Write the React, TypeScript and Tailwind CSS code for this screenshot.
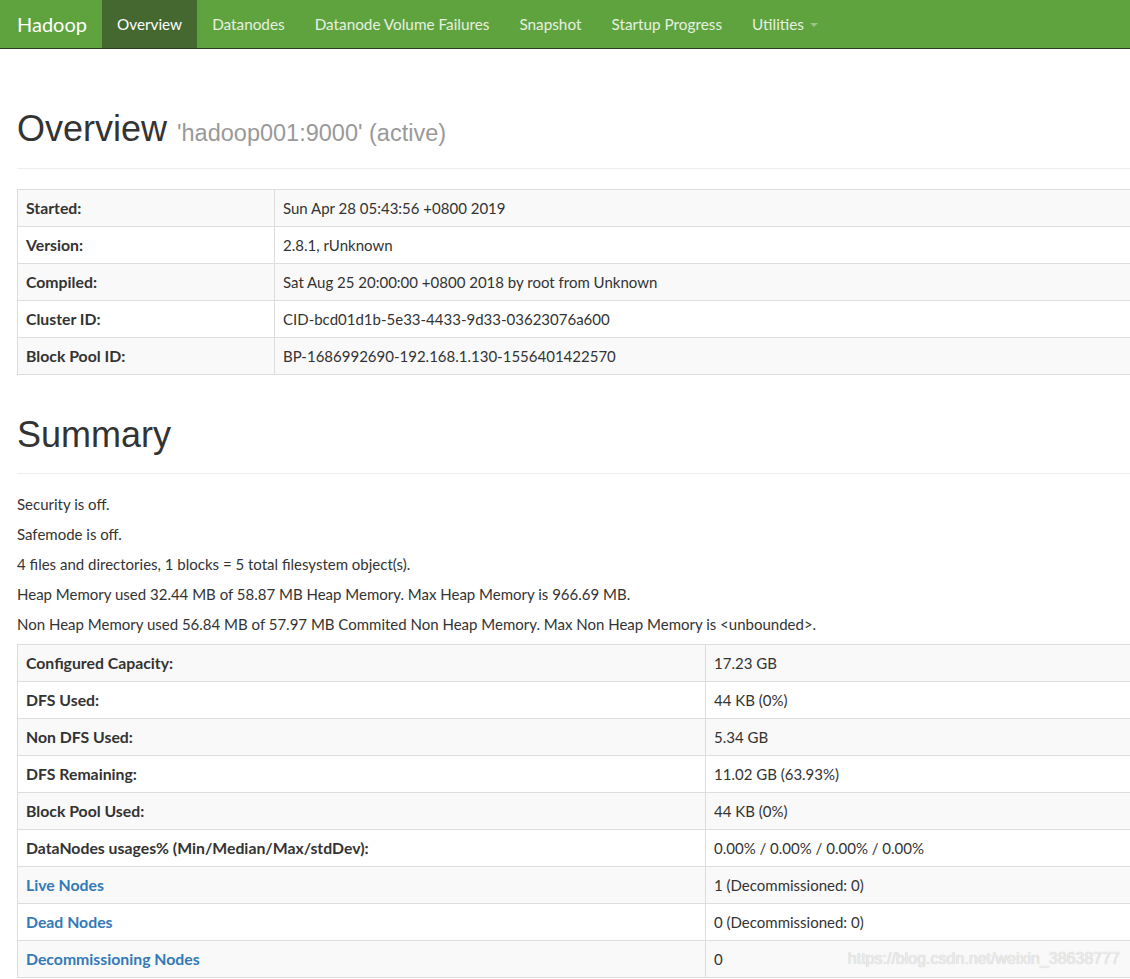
import React from "react";

const nav = [
  "Overview",
  "Datanodes",
  "Datanode Volume Failures",
  "Snapshot",
  "Startup Progress",
];

const info: [string, string, boolean?][] = [
  ["Started:", "Sun Apr 28 05:43:56 +0800 2019"],
  ["Version:", "2.8.1, rUnknown"],
  ["Compiled:", "Sat Aug 25 20:00:00 +0800 2018 by root from Unknown"],
  ["Cluster ID:", "CID-bcd01d1b-5e33-4433-9d33-03623076a600"],
  ["Block Pool ID:", "BP-1686992690-192.168.1.130-1556401422570"],
];

const summaryText = [
  "Security is off.",
  "Safemode is off.",
  "4 files and directories, 1 blocks = 5 total filesystem object(s).",
  "Heap Memory used 32.44 MB of 58.87 MB Heap Memory. Max Heap Memory is 966.69 MB.",
  "Non Heap Memory used 56.84 MB of 57.97 MB Commited Non Heap Memory. Max Non Heap Memory is <unbounded>.",
];

const summary: [string, string, boolean?][] = [
  ["Configured Capacity:", "17.23 GB"],
  ["DFS Used:", "44 KB (0%)"],
  ["Non DFS Used:", "5.34 GB"],
  ["DFS Remaining:", "11.02 GB (63.93%)"],
  ["Block Pool Used:", "44 KB (0%)"],
  ["DataNodes usages% (Min/Median/Max/stdDev):", "0.00% / 0.00% / 0.00% / 0.00%"],
  ["Live Nodes", "1 (Decommissioned: 0)", true],
  ["Dead Nodes", "0 (Decommissioned: 0)", true],
  ["Decommissioning Nodes", "0", true],
];

const PageHeader = ({ children }: { children: React.ReactNode }) => (
  <div className="mb-[20px] border-b border-[#eee] pb-[9px]">
    <h1 className="mt-0 mb-[10px] font-['Liberation_Sans',Arial,sans-serif] text-[36px] leading-[1.1] text-[#333]">
      {children}
    </h1>
  </div>
);

const InfoTable = ({
  rows,
  firstCol,
}: {
  rows: [string, string, boolean?][];
  firstCol: string;
}) => (
  <table className="w-full border-collapse border border-[#ddd]">
    <tbody>
      {rows.map(([k, v, link], i) => (
        <tr key={k} className={i % 2 === 0 ? "bg-[#f9f9f9]" : "bg-white"}>
          <th
            className={`${firstCol} border border-[#ddd] p-[8px] text-left text-[15.8px] font-bold leading-[20px] ${
              link ? "text-[#337ab7]" : "text-[#333]"
            }`}
          >
            {k}
          </th>
          <td className="border border-[#ddd] p-[8px] leading-[20px] text-[#333]">{v}</td>
        </tr>
      ))}
    </tbody>
  </table>
);

export default function App() {
  return (
    <div className="relative h-[979px] w-[1130px] overflow-hidden bg-white font-['Lato','Noto_Sans',sans-serif] text-[15px] text-[#333]">
      <div className="flex h-[49px] border-b border-[#2b3a22] bg-[#5fa33e] text-[15.3px]">
        <div className="flex items-center pl-[17px] pr-[15px] text-[20px] text-white">
          Hadoop
        </div>
        {nav.map((n, i) => (
          <div
            key={n}
            className={`flex items-center px-[15px] ${
              i === 0 ? "bg-[#44682f] text-white" : "text-[#e6f0e0]"
            }`}
          >
            {n}
          </div>
        ))}
        <div className="flex items-center px-[15px] text-[#e6f0e0]">
          Utilities
          <span className="ml-[6px] mt-[2px] h-0 w-0 border-x-[4px] border-t-[4px] border-x-transparent border-t-[#9cbf8b]" />
        </div>
      </div>

      <div className="w-[1300px] px-[17px]">
        <div className="pt-[60px]">
          <PageHeader>
            Overview{" "}
            <span className="text-[23.5px] text-[#999]">'hadoop001:9000' (active)</span>
          </PageHeader>
        </div>
        <InfoTable rows={info} firstCol="w-[257px]" />

        <div className="pt-[40px]">
          <PageHeader>Summary</PageHeader>
        </div>
        {summaryText.map((t) => (
          <p key={t} className="mb-[10px] leading-[20px]">
            {t}
          </p>
        ))}
        <InfoTable rows={summary} firstCol="w-[688px]" />
      </div>

      <div className="absolute right-[10px] bottom-[8px] font-['Liberation_Sans',Arial,sans-serif] text-[16px] text-[#ececec] [text-shadow:0_0_1px_#bbb]">
        https://blog.csdn.net/weixin_38638777
      </div>
    </div>
  );
}
